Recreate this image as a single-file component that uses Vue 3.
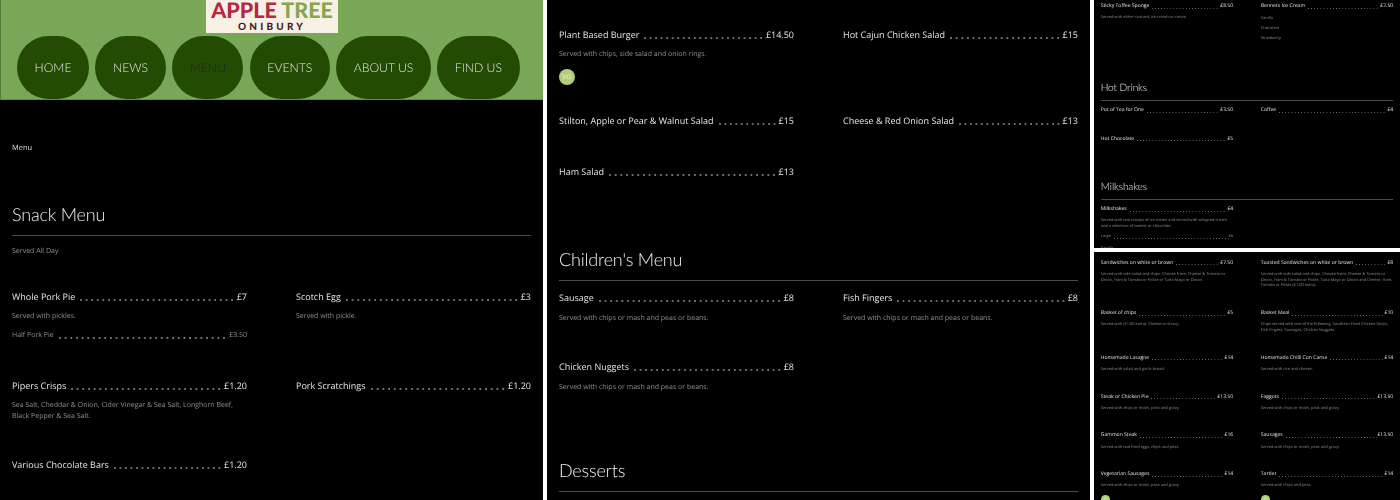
<script setup>
const navLinks = ['Home', 'News', 'Menu', 'Events', 'About Us', 'Find Us']

const chipsMash = 'Served with chips or mash and peas or beans.'
const chipsGravy = 'Served with chips or mash, peas and gravy.'

const snacks = [
  { name: 'Whole Pork Pie', price: '£7', desc: ['Served with pickles.'], sub: [{ name: 'Half Pork Pie', price: '£3.50' }] },
  { name: 'Scotch Egg', price: '£3', desc: ['Served with pickle.'] },
  { name: 'Pipers Crisps', price: '£1.20', desc: ['Sea Salt, Cheddar & Onion, Cider Vinegar & Sea Salt, Longhorn Beef, Black Pepper & Sea Salt.'] },
  { name: 'Pork Scratchings', price: '£1.20' },
  { name: 'Various Chocolate Bars', price: '£1.20' }
]

const salads = [
  { name: 'Plant Based Burger', price: '£14.50', desc: ['Served with chips, side salad and onion rings.'], badge: 'VG' },
  { name: 'Hot Cajun Chicken Salad', price: '£15' },
  { name: 'Stilton, Apple or Pear & Walnut Salad', price: '£15' },
  { name: 'Cheese & Red Onion Salad', price: '£13' },
  { name: 'Ham Salad', price: '£13' }
]

const children = [
  { name: 'Sausage', price: '£8', desc: [chipsMash] },
  { name: 'Fish Fingers', price: '£8', desc: [chipsMash] },
  { name: 'Chicken Nuggets', price: '£8', desc: [chipsMash] }
]

const desserts = [
  { name: 'Sticky Toffee Sponge', price: '£8.50', desc: ['Served with either custard, ice cream or cream.'] },
  { name: 'Bennets Ice Cream', price: '£2.50', flavours: ['Vanilla', 'Chocolate', 'Strawberry'] }
]

const hotDrinks = [
  { name: 'Pot of Tea for One', price: '£3.50' },
  { name: 'Coffee', price: '£4' },
  { name: 'Hot Chocolate', price: '£5' }
]

const milkshakes = [
  {
    name: 'Milkshakes',
    price: '£4',
    desc: ['Served with two scoops of ice cream and served with whipped cream and a selection of sweets or chocolate.'],
    sub: [{ name: 'Large', price: '£6' }],
    flavours: ['Vanilla']
  }
]

const mains = [
  { name: 'Sandwiches on white or brown', price: '£7.50', desc: ['Served with side salad and chips. Choose from: Cheese & Tomato or Onion, Ham & Tomato or Pickle or Tuna Mayo or Onion.'] },
  { name: 'Toasted Sandwiches on white or brown', price: '£8', desc: ['Served with side salad and chips. Choose from: Cheese & Tomato or Onion, Ham & Tomato or Pickle, Tuna Mayo or Onion and Cheese, Ham, Tomato or Pickle (£1.00 extra).'] },
  { name: 'Basket of chips', price: '£5', desc: ['Served with (£1.00 extra): Cheese or Gravy.'] },
  { name: 'Basket Meal', price: '£10', desc: ['Chips served with one of the following: Southern Fried Chicken Strips, Fish Fingers, Sausages, Chicken Nuggets.'] },
  { name: 'Homemade Lasagne', price: '£14', desc: ['Served with salad and garlic bread.'] },
  { name: 'Homemade Chilli Con Carne', price: '£14', desc: ['Served with rice and cheese.'] },
  { name: 'Steak or Chicken Pie', price: '£13.50', desc: [chipsGravy] },
  { name: 'Faggots', price: '£13.50', desc: [chipsGravy] },
  { name: 'Gammon Steak', price: '£16', desc: ['Served with two fried eggs, chips and peas.'] },
  { name: 'Sausages', price: '£13.50', desc: [chipsGravy] },
  { name: 'Vegetarian Sausages', price: '£14', desc: [chipsGravy], badge: 'V' },
  { name: 'Tartlet', price: '£14', desc: ['Served with chips and peas.'], badge: 'V' }
]

const panels = [
  { id: 'salads', cls: 'panel-mid', groups: [
    { items: salads },
    { title: "Children's Menu", items: children },
    { title: 'Desserts', items: [] }
  ] },
  { id: 'drinks', cls: 'panel-small panel-drinks', groups: [
    { items: desserts },
    { title: 'Hot Drinks', items: hotDrinks },
    { title: 'Milkshakes', items: milkshakes }
  ] },
  { id: 'mains', cls: 'panel-small panel-mains', groups: [{ items: mains }] }
]
</script>

<template>
  <div class="montage">
    <section class="panel panel-home">
      <header class="site-header">
        <div class="logo">
          <div class="logo-main"><span class="apple">APPLE</span> <span class="tree">TREE</span></div>
          <div class="logo-sub">ONIBURY</div>
        </div>
        <nav class="nav">
          <a v-for="link in navLinks" :key="link" class="nav-link" :class="{ active: link === 'Menu' }"><span class="nav-text">{{ link }}</span></a>
        </nav>
      </header>
      <div class="content">
        <p class="crumb">Menu</p>
        <h2 class="group-title">Snack Menu</h2>
        <p class="intro">Served All Day</p>
        <div class="items">
          <article v-for="item in snacks" :key="item.name" class="item">
            <div class="row">
              <span>{{ item.name }}</span><i class="dots"></i><span>{{ item.price }}</span>
            </div>
            <p v-for="line in item.desc" :key="line" class="desc">{{ line }}</p>
            <div v-for="s in item.sub" :key="s.name" class="row row-sub">
              <span>{{ s.name }}</span><i class="dots"></i><span>{{ s.price }}</span>
            </div>
          </article>
        </div>
      </div>
    </section>

    <section v-for="panel in panels" :key="panel.id" class="panel" :class="panel.cls">
      <div class="content">
        <div v-for="(group, g) in panel.groups" :key="g" class="group">
          <h2 v-if="group.title" class="group-title">{{ group.title }}</h2>
          <div class="items" :class="{ 'after-title': group.title }">
            <article v-for="item in group.items" :key="item.name" class="item">
              <div class="row">
                <span>{{ item.name }}</span><i class="dots"></i><span>{{ item.price }}</span>
              </div>
              <p v-for="line in item.desc" :key="line" class="desc">{{ line }}</p>
              <div v-for="s in item.sub" :key="s.name" class="row row-sub">
                <span>{{ s.name }}</span><i class="dots"></i><span>{{ s.price }}</span>
              </div>
              <p v-for="f in item.flavours" :key="f" class="flavour">{{ f }}</p>
              <span v-if="item.badge" class="badge">{{ item.badge }}</span>
            </article>
          </div>
        </div>
      </div>
    </section>
  </div>
</template>

<style>
body {
  background: #fff;
  overflow: hidden;
}
</style>

<style scoped>
.montage {
  display: grid;
  grid-template-columns: 543px 543px 306px;
  grid-template-rows: 248px 248px;
  gap: 4px;
  width: 1400px;
  height: 500px;
  background: #fff;
  font-family: "Open Sans", "Liberation Sans", sans-serif;
  text-rendering: geometricPrecision;
}

.panel {
  background: #000;
  overflow: hidden;
  min-width: 0;
}

.panel-home,
.panel-mid {
  grid-row: 1 / 3;
}

.site-header {
  display: flex;
  flex-direction: column;
  align-items: center;
  height: 100px;
  box-sizing: border-box;
  background: #77a757;
  border-left: 1px solid #4f7d3c;
  border-bottom: 1px solid #5f9146;
}

.logo {
  width: 132px;
  height: 33px;
  background: #f6f1e4;
  text-align: center;
  font-family: Lato, "Liberation Sans", sans-serif;
  font-weight: 900;
}

.logo-main {
  font-size: 21.5px;
  line-height: 20px;
  white-space: nowrap;
}

.apple {
  color: #b5283f;
}

.tree {
  color: #88a650;
}

.logo-sub {
  color: #4a1a20;
  margin-top: 1px;
  font-size: 10px;
  line-height: 12px;
  letter-spacing: 3.2px;
}

.nav {
  display: flex;
  gap: 6.5px;
  align-self: flex-start;
  margin: 3px 0 0 16px;
}

.nav-link {
  display: flex;
  align-items: center;
  height: 63px;
  padding: 0 17.5px;
  border-radius: 32px;
  background: #234b03;
  color: #dde8d2;
  font-family: Lato, "Liberation Sans", sans-serif;
  font-weight: 300;
  font-size: 12.2px;
  text-transform: uppercase;
  white-space: nowrap;
}

.nav-link.active {
  color: #0d2b12;
}

/* grey text, the reference has no subpixel colour fringes */
.nav-text,
.crumb,
.group-title,
.intro,
.row,
.desc,
.flavour {
  filter: grayscale(1);
}

.content {
  padding: 0 12px;
}

.crumb {
  margin: 43px 0 0;
  color: #ddd;
  font-size: 7.5px;
  line-height: 10px;
}

.group-title {
  margin: 0;
  padding: 0 0 6px;
  border-bottom: 1px solid #4a4a4a;
  color: #f2f2f2;
  font-family: Lato, "Liberation Sans", sans-serif;
  font-weight: 300;
  font-size: 18px;
  letter-spacing: -0.2px;
  line-height: 30px;
}

.crumb + .group-title {
  margin-top: 46px;
}

.group + .group {
  margin-top: 62px;
}

.group + .group:last-child {
  margin-top: 60px;
}

.intro {
  margin: 11px 0 30px;
  color: #8f8f8f;
  font-size: 7px;
  line-height: 10px;
}

.items {
  display: grid;
  grid-template-columns: 235px 235px;
  column-gap: 49px;
  row-gap: 31px;
}

.items.after-title {
  margin-top: 7px;
}

.item {
  min-width: 0;
}

.row {
  display: flex;
  height: 20px;
  line-height: 20px;
  color: #e4e4e4;
  font-size: 9px;
  white-space: nowrap;
}

.dots {
  flex: 1;
  height: 2px;
  margin: 12px 0 0 5px;
  background-image: radial-gradient(circle at 1px 1px, #777 0.7px, transparent 0.9px);
  background-size: 5.6px 2px;
  background-repeat: round no-repeat;
}

.desc {
  margin: 5.3px 0 2.4px;
  color: #8f8f8f;
  font-size: 7px;
  line-height: 10.3px;
}

.row-sub {
  color: #8f8f8f;
  font-size: 7px;
  line-height: 22px;
}

.flavour {
  margin: 0;
  color: #8f8f8f;
  font-size: 7px;
  line-height: 18.5px;
}

.row + .flavour {
  margin-top: 2px;
}

.badge {
  display: flex;
  align-items: center;
  justify-content: center;
  width: 16px;
  height: 16px;
  margin: 9.4px 0 -5px;
  border-radius: 50%;
  background: #b4cf7a;
  color: #e4eecb;
  font-size: 7px;
}

.panel-mid .content {
  padding-top: 24.5px;
}

.panel-small {
  grid-column: 3;
}

.panel-small .content {
  zoom: 0.5635;
  width: 519px;
}

.panel-drinks .content {
  margin-top: 2px;
}

.panel-mains .content {
  padding-top: 10px;
}
</style>
